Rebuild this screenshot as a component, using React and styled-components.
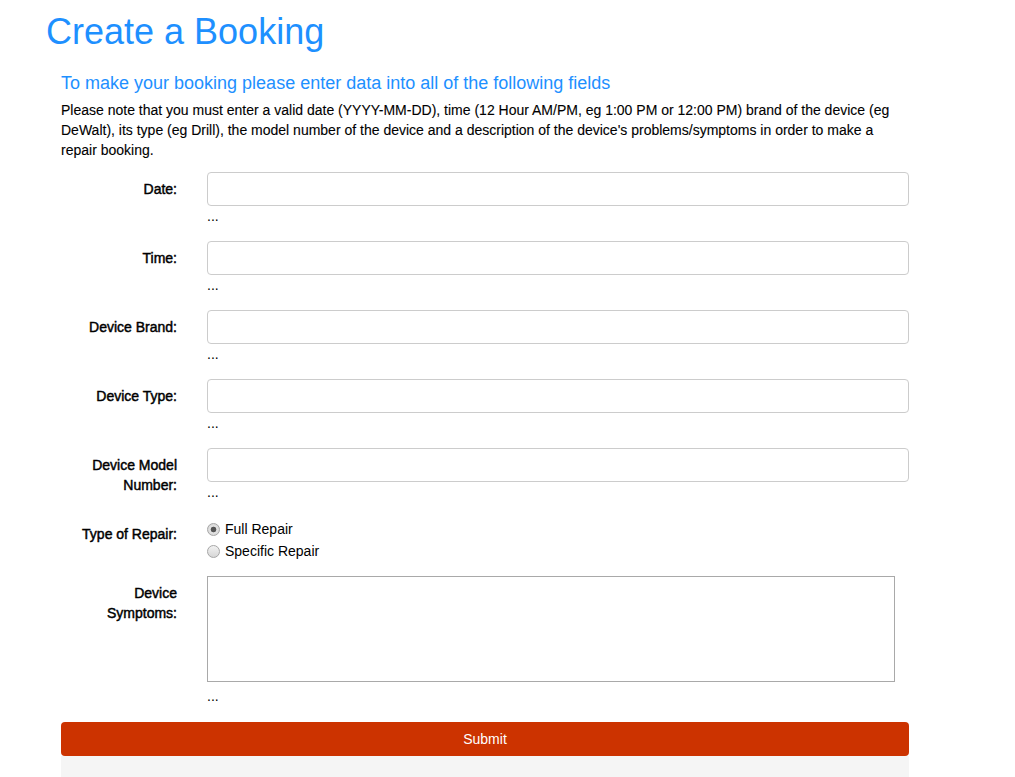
import React, { useState } from "react";
import styled, { createGlobalStyle } from "styled-components";

const GlobalStyle = createGlobalStyle`
  body {
    margin: 0;
    background: #fff;
    font-family: "Liberation Sans", Arial, sans-serif;
    color: #111;
  }
`;

const Page = styled.div`
  padding: 12px 0 0 46px;
`;

const Title = styled.h1`
  margin: 0 0 21px;
  font-size: 36px;
  line-height: 40px;
  font-weight: 400;
  color: #1e90ff;
`;

const Content = styled.div`
  margin-left: 15px;
  width: 848px;
`;

const Subheading = styled.h3`
  margin: 0 0 7px;
  font-size: 18px;
  line-height: 20px;
  font-weight: 400;
  color: #1e90ff;
`;

const Note = styled.p`
  margin: 0 0 12px;
  font-size: 14px;
  line-height: 20px;
  color: #000;
  -webkit-text-stroke: 0.1px #000;
`;

const Row = styled.div`
  display: grid;
  grid-template-columns: 116px 1fr;
  column-gap: 30px;
  margin-bottom: ${(p) => p.$gap}px;
`;

const Label = styled.label`
  text-align: right;
  font-weight: 400;
  font-size: 14px;
  line-height: 20px;
  padding-top: 7px;
  color: #000;
  -webkit-text-stroke: 0.45px #000;
`;

const Field = styled.div`
  display: flex;
  flex-direction: column;
  font-size: 14px;
`;

const TextInput = styled.input`
  display: block;
  box-sizing: border-box;
  width: 100%;
  height: 34px;
  padding: 6px 12px;
  border: 1px solid #ccc;
  border-radius: 4px;
  font: inherit;
  outline: none;
`;

const Hint = styled.span`
  padding-top: 2px;
  line-height: 16px;
  font-size: 14px;
  color: #000;
`;

const RadioGroup = styled.div`
  display: flex;
  flex-direction: column;
  gap: 2px;
  padding-top: 2px;
`;

const RadioOption = styled.label`
  display: flex;
  align-items: center;
  gap: 5px;
  line-height: 20px;
  font-size: 14px;
  color: #000;
`;

const Radio = styled.input`
  appearance: none;
  margin: 0;
  width: 13px;
  height: 13px;
  border-radius: 50%;
  border: 1px solid #a6a6a6;
  box-sizing: border-box;
  background: linear-gradient(#f2f2f2, #d6d6d6);
  &:checked {
    background: radial-gradient(circle, #555 0 2.5px, #e4e4e4 3.2px, #d0d0d0 100%);
  }
`;

const Symptoms = styled.textarea`
  display: block;
  box-sizing: border-box;
  width: 688px;
  height: 106px;
  margin-bottom: 4px;
  border: 1px solid #a9a9a9;
  border-radius: 0;
  resize: none;
  font: inherit;
  outline: none;
`;

const SubmitButton = styled.button`
  display: block;
  width: 100%;
  height: 34px;
  border: none;
  border-radius: 4px;
  background: #cc3300;
  color: #fff;
  font-family: "Liberation Sans", Arial, sans-serif;
  font-size: 14px;
  line-height: 20px;
`;

const Footer = styled.div`
  height: 24px;
  background: #f5f5f5;
`;

const fields = [
  { name: "date", label: "Date:" },
  { name: "time", label: "Time:" },
  { name: "brand", label: "Device Brand:" },
  { name: "type", label: "Device Type:" },
  { name: "model", label: "Device Model Number:" },
];

export default function App() {
  const [repair, setRepair] = useState("full");

  return (
    <Page>
      <GlobalStyle />
      <Title>Create a Booking</Title>
      <Content>
        <Subheading>To make your booking please enter data into all of the following fields</Subheading>
        <Note>
          Please note that you must enter a valid date (YYYY-MM-DD), time (12 Hour AM/PM, eg 1:00 PM or 12:00 PM) brand of the device (eg
          DeWalt), its type (eg Drill), the model number of the device and a description of the device's problems/symptoms in order to make a
          repair booking.
        </Note>
        <form onSubmit={(e) => e.preventDefault()}>
          {fields.map((f) => (
            <Row key={f.name} $gap={17}>
              <Label htmlFor={f.name}>{f.label}</Label>
              <Field>
                <TextInput id={f.name} name={f.name} type="text" />
                <Hint>...</Hint>
              </Field>
            </Row>
          ))}
          <Row $gap={15}>
            <Label>Type of Repair:</Label>
            <RadioGroup>
              <RadioOption>
                <Radio type="radio" name="repair" checked={repair === "full"} onChange={() => setRepair("full")} />
                Full Repair
              </RadioOption>
              <RadioOption>
                <Radio type="radio" name="repair" checked={repair === "specific"} onChange={() => setRepair("specific")} />
                Specific Repair
              </RadioOption>
            </RadioGroup>
          </Row>
          <Row $gap={18}>
            <Label htmlFor="symptoms">Device Symptoms:</Label>
            <Field>
              <Symptoms id="symptoms" name="symptoms" />
              <Hint>...</Hint>
            </Field>
          </Row>
          <SubmitButton type="submit">Submit</SubmitButton>
          <Footer />
        </form>
      </Content>
    </Page>
  );
}
